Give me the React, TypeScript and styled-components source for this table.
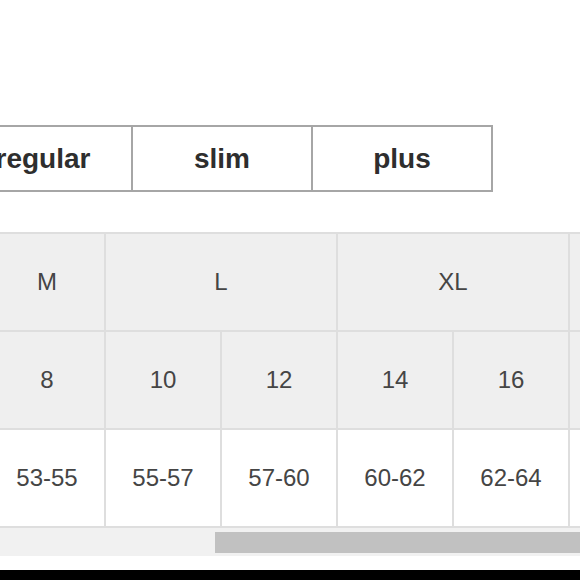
import React from 'react';
import styled, { createGlobalStyle } from 'styled-components';

const GlobalStyle = createGlobalStyle`
  html, body {
    margin: 0;
    padding: 0;
    background: #ffffff;
    overflow: hidden;
  }
  body {
    font-family: "Liberation Sans", Arial, sans-serif;
  }
`;

const Page = styled.div`
  width: 580px;
  height: 580px;
  display: flex;
  flex-direction: column;
  overflow: hidden;
`;

const FitTabs = styled.div`
  display: flex;
  margin: 125px 0 0 -47px;
`;

const FitTab = styled.div<{ $first?: boolean }>`
  flex: 0 0 180px;
  height: 67px;
  box-sizing: border-box;
  border: 2px solid #a6a6a6;
  border-left-width: ${p => (p.$first ? '2px' : '0')};
  display: flex;
  align-items: center;
  justify-content: center;
  font-size: 28px;
  font-weight: bold;
  color: #2e2e2e;
`;

const SizeGrid = styled.div`
  display: grid;
  grid-template-columns: repeat(6, 114px);
  grid-auto-rows: 96px;
  gap: 2px;
  margin: 40px 0 0 -10px;
  padding: 2px 0;
  background: #dedede;
  width: max-content;
`;

const Cell = styled.div<{ $span?: number; $head?: boolean }>`
  grid-column: span ${p => p.$span ?? 1};
  background: ${p => (p.$head ? '#efefef' : '#ffffff')};
  display: flex;
  align-items: center;
  justify-content: center;
  font-size: 24px;
  color: #454545;
`;

const ScrollTrack = styled.div`
  height: 28px;
  background: #f1f1f1;
  display: flex;
  align-items: center;
`;

const ScrollThumb = styled.div`
  height: 21px;
  flex: 1;
  background: #c1c1c1;
`;

const Spacer = styled.div`
  flex: 1;
`;

const BottomBar = styled.div`
  height: 10px;
  background: #000000;
`;

const sizes = [
  { label: 'M', span: 1 },
  { label: 'L', span: 2 },
  { label: 'XL', span: 2 },
  { label: 'XXL', span: 1 },
];

const numbers = ['8', '10', '12', '14', '16', '18'];
const chest = ['53-55', '55-57', '57-60', '60-62', '62-64', '64-66'];

const App: React.FC = () => {
  const thumbOffset = 215;

  return (
    <Page>
      <GlobalStyle />
      <FitTabs>
        <FitTab $first>regular</FitTab>
        <FitTab>slim</FitTab>
        <FitTab>plus</FitTab>
      </FitTabs>

      <SizeGrid>
        {sizes.map(s => (
          <Cell key={s.label} $span={s.span} $head>
            {s.label}
          </Cell>
        ))}
        {numbers.map(n => (
          <Cell key={n} $head>
            {n}
          </Cell>
        ))}
        {chest.map(c => (
          <Cell key={c}>{c}</Cell>
        ))}
      </SizeGrid>

      <ScrollTrack>
        <div style={{ width: thumbOffset }} />
        <ScrollThumb />
      </ScrollTrack>

      <Spacer />
      <BottomBar />
    </Page>
  );
};

export default App;
